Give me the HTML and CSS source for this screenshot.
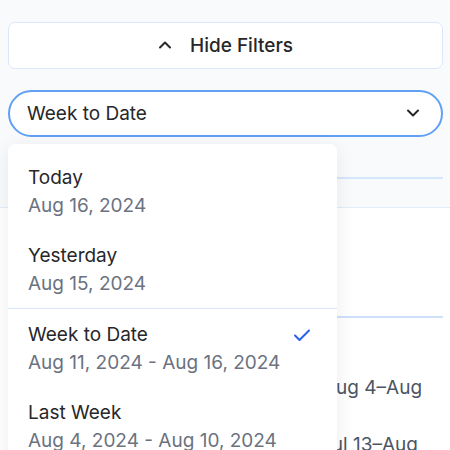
FILE: index.html
```html
<!DOCTYPE html>
<html>
<head>
<meta charset="utf-8">
<link rel="stylesheet" href="styles.css">
</head>
<body>
<div class="page">
  <div class="top">
    <button class="toggle">
      <svg class="chev-up" width="14" height="9" viewBox="0 0 14 9"><path d="M2 7.5 L7 2.5 L12 7.5" fill="none" stroke="#27272a" stroke-width="2" stroke-linecap="round" stroke-linejoin="round"/></svg>
      <span>Hide Filters</span>
    </button>
    <div class="select">
      <span>Week to Date</span>
      <svg width="14" height="9" viewBox="0 0 14 9"><path d="M2 1.5 L7 6.5 L12 1.5" fill="none" stroke="#27272a" stroke-width="2" stroke-linecap="round" stroke-linejoin="round"/></svg>
    </div>
    <div class="tabs-line"></div>
  </div>
  <div class="lower">
    <div class="lower-line"></div>
    <div class="row row-a">Aug 4–Aug</div>
    <div class="row row-b">Jul 13–Aug</div>
  </div>

  <div class="menu">
    <div class="item">
      <div class="label">Today</div>
      <div class="date">Aug 16, 2024</div>
    </div>
    <div class="item divided">
      <div class="label">Yesterday</div>
      <div class="date">Aug 15, 2024</div>
    </div>
    <div class="item selected">
      <div class="label-row">
        <div class="label">Week to Date</div>
        <svg width="18" height="14" viewBox="0 0 18 14"><path d="M2 7.5 L6.5 12 L16 2.5" fill="none" stroke="#2563eb" stroke-width="2" stroke-linecap="round" stroke-linejoin="round"/></svg>
      </div>
      <div class="date">Aug 11, 2024 - Aug 16, 2024</div>
    </div>
    <div class="item">
      <div class="label">Last Week</div>
      <div class="date">Aug 4, 2024 - Aug 10, 2024</div>
    </div>
  </div>
</div>
</body>
</html>
```

FILE: styles.css
```css
* { box-sizing: border-box; }
html, body { margin: 0; padding: 0; }
body {
  width: 450px;
  height: 450px;
  overflow: hidden;
  background: #ffffff;
  font-family: Inter, "Noto Sans", sans-serif;
  color: #27272a;
}
.page { position: relative; height: 450px; overflow: hidden; }
.top {
  background: #f8fafc;
  padding: 22px 7px 0 8px;
  height: 208px;
  border-bottom: 1px solid #e3ecfa;
}
.toggle {
  width: 100%;
  height: 47px;
  background: #ffffff;
  border: 1px solid #dbe8fc;
  border-radius: 7px;
  display: flex;
  align-items: center;
  justify-content: center;
  gap: 18px;
  font-family: Inter, "Noto Sans", sans-serif;
  font-size: 19px;
  font-weight: 500;
  color: #27272a;
  padding: 0 0 0 0;
}
.chev-up { margin-top: -2px; }
.select {
  margin-top: 21px;
  height: 47px;
  background: #ffffff;
  border: 2px solid #60a0f5;
  border-radius: 24px;
  display: flex;
  align-items: center;
  justify-content: space-between;
  padding: 0 21px 0 17px;
  font-size: 19px;
}
.tabs-line {
  margin-top: 40px;
  height: 2px;
  background: #d6e6fb;
}
.lower {
  padding: 108px 7px 0 8px;
}
.lower-line {
  height: 2px;
  background: #cfe1fa;
}
.row {
  font-size: 19px;
  color: #4b5563;
  height: 28px;
  line-height: 28px;
  white-space: nowrap;
}
.row-a { margin-top: 56px; padding-left: 315px; }
.row-b { margin-top: 29px; padding-left: 313px; }
.menu {
  position: absolute;
  left: 8px;
  top: 144px;
  width: 329px;
  background: #ffffff;
  border-radius: 7px;
  box-shadow: 0 4px 20px rgba(15, 23, 42, 0.08);
  padding-top: 8px;
  height: 330px;
}
.item {
  padding: 12px 26px 10px 20px;
}
.item.divided { border-bottom: 1px solid #d9e6fb; }
.label {
  font-size: 19px;
  line-height: 28px;
  color: #27272a;
}
.date {
  font-size: 19px;
  line-height: 28px;
  color: #6b7280;
}
.label-row {
  display: flex;
  align-items: center;
  justify-content: space-between;
}
```
